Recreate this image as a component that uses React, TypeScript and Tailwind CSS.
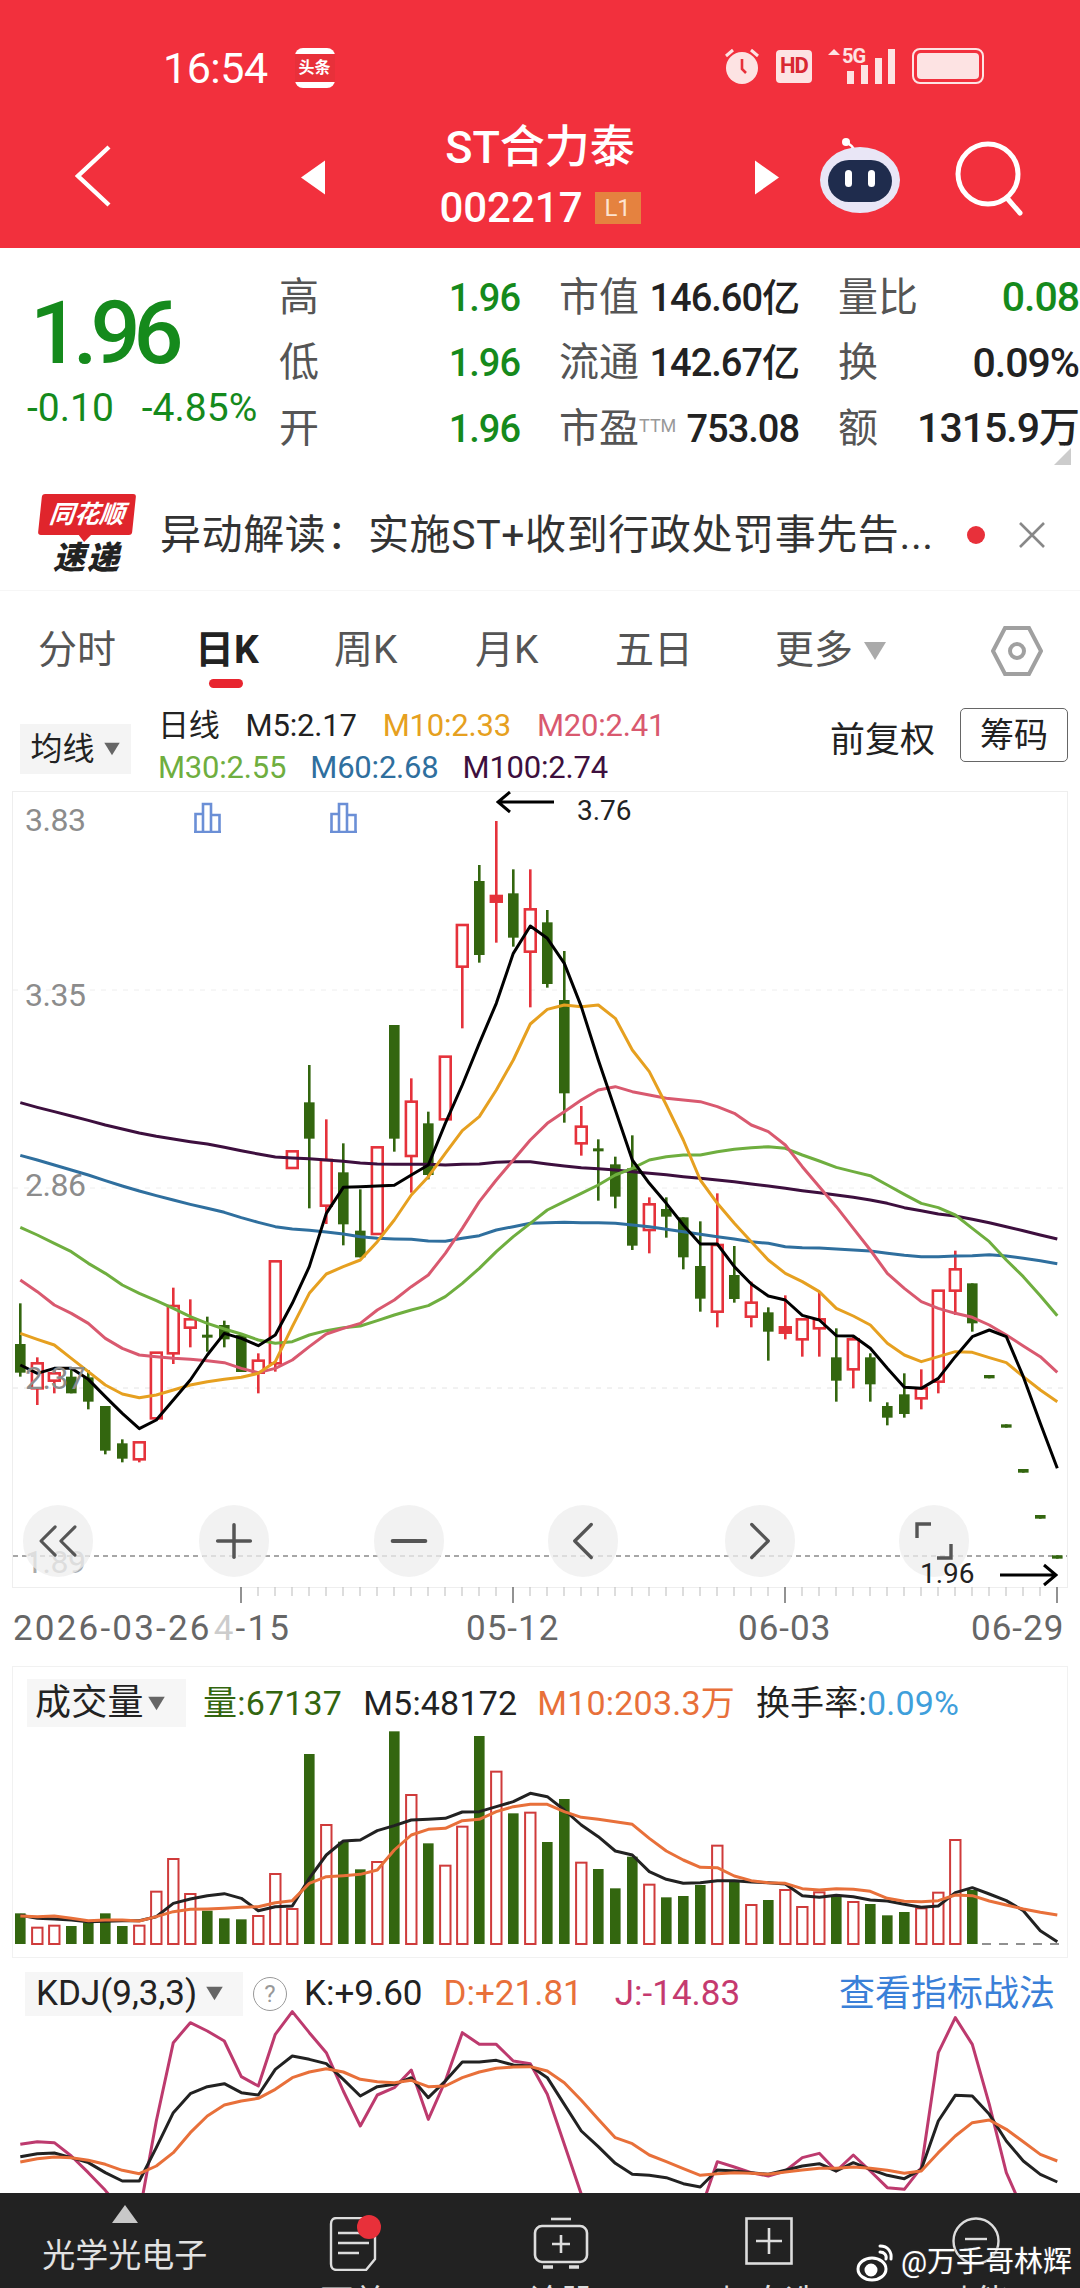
import React from 'react';
import { ChevronLeft, ChevronRight, ChevronsLeft, Minus, Plus } from 'lucide-react';

// all chart values are read off the reference: y = base + z / 3
type Candle = [number, number, number, number, 'r' | 'g'];

const candles: Candle[] = [
  [730, 852, 938, 950, 'g'], [892, 910, 985, 1035, 'r'], [925, 940, 962, 1000, 'r'], [930, 950, 1000, 1000, 'g'],
  [930, 952, 1025, 1048, 'g'], [1038, 1038, 1172, 1183, 'g'], [1138, 1150, 1196, 1207, 'g'], [1147, 1147, 1198, 1207, 'r'],
  [878, 878, 1075, 1075, 'r'], [683, 738, 880, 912, 'r'], [718, 778, 803, 862, 'r'], [770, 824, 830, 875, 'g'],
  [782, 795, 838, 862, 'g'], [820, 825, 936, 936, 'g'], [880, 902, 938, 1000, 'r'], [604, 604, 910, 935, 'r'],
  [274, 274, 324, 324, 'r'], [15, 127, 236, 445, 'g'], [178, 300, 437, 492, 'r'], [250, 337, 493, 556, 'g'],
  [388, 512, 592, 592, 'g'], [262, 262, 522, 522, 'r'], [-105, -105, 236, 275, 'g'], [55, 125, 288, 398, 'r'],
  [155, 190, 345, 358, 'g'], [-10, -10, 178, 178, 'r'], [-405, -405, -280, -95, 'r'], [-585, -537, -315, -292, 'g'],
  [-717, -492, -475, -352, 'r'], [-572, -500, -367, -340, 'g'], [-572, -452, -325, -158, 'r'], [-450, -413, -228, -217, 'g'],
  [-327, -180, 100, 188, 'g'], [138, 200, 250, 287, 'r'], [238, 265, 272, 422, 'g'], [290, 313, 410, 445, 'g'],
  [226, 325, 557, 570, 'g'], [412, 433, 510, 580, 'r'], [412, 447, 470, 533, 'g'], [472, 472, 592, 628, 'g'],
  [484, 618, 716, 755, 'g'], [400, 555, 755, 802, 'r'], [558, 645, 717, 728, 'g'], [665, 728, 770, 802, 'r'],
  [742, 757, 815, 902, 'g'], [706, 802, 818, 838, 'r'], [778, 778, 838, 890, 'r'], [695, 778, 805, 890, 'r'],
  [805, 892, 962, 1025, 'g'], [830, 838, 928, 985, 'r'], [880, 892, 973, 1025, 'g'], [1027, 1038, 1073, 1096, 'g'],
  [940, 1003, 1062, 1073, 'g'], [928, 985, 1015, 1048, 'r'], [692, 692, 965, 1000, 'r'], [572, 628, 692, 765, 'r'],
  [670, 670, 790, 815, 'g'], [945, 945, 955, 955, 'g'], [1093, 1093, 1103, 1103, 'g'], [1227, 1227, 1238, 1238, 'g'],
  [1365, 1365, 1376, 1376, 'g'], [1486, 1486, 1496, 1496, 'g'],
];

const m5 = [915, 940, 925, 925, 958, 1010, 1060, 1106, 1080, 1020, 960, 885, 820, 835, 857, 825, 730, 620, 460, 382, 380, 378, 376, 345, 315, 190, 75, -50, -170, -320, -402, -365, -290, -160, 0, 150, 300, 370, 430, 495, 552, 552, 620, 672, 708, 720, 766, 780, 827, 828, 865, 925, 982, 985, 955, 890, 830, 810, 830, 950, 1090, 1225];
const m10 = [820, 838, 855, 895, 935, 975, 1002, 1013, 1005, 990, 975, 965, 958, 952, 940, 905, 800, 700, 642, 620, 600, 545, 480, 405, 350, 280, 212, 170, 90, 0, -108, -152, -165, -160, -165, -125, -30, 35, 135, 240, 360, 430, 490, 545, 600, 640, 665, 695, 745, 768, 795, 850, 885, 905, 890, 875, 877, 893, 908, 950, 990, 1025];
const m20 = [660, 695, 735, 760, 790, 835, 865, 885, 890, 895, 898, 902, 908, 925, 938, 925, 900, 860, 822, 805, 790, 750, 720, 680, 645, 580, 505, 425, 360, 300, 240, 190, 155, 120, 90, 80, 95, 105, 115, 120, 125, 140, 160, 195, 215, 255, 320, 380, 440, 505, 570, 640, 685, 725, 745, 760, 772, 795, 825, 858, 890, 937];
const m30 = [502, 525, 550, 575, 610, 640, 675, 700, 722, 745, 770, 790, 807, 822, 840, 850, 845, 825, 812, 803, 798, 782, 765, 750, 737, 710, 670, 625, 575, 530, 490, 450, 425, 400, 375, 345, 325, 300, 290, 285, 285, 275, 268, 263, 260, 265, 285, 303, 322, 335, 347, 375, 403, 430, 443, 465, 505, 545, 600, 650, 707, 767];
const m60 = [286, 300, 315, 330, 345, 362, 378, 393, 407, 420, 433, 445, 457, 473, 487, 500, 507, 511, 516, 522, 530, 535, 537, 538, 543, 544, 535, 527, 510, 500, 490, 488, 487, 488, 488, 490, 495, 500, 508, 515, 523, 530, 537, 545, 550, 560, 563, 564, 567, 570, 573, 580, 586, 590, 590, 588, 587, 584, 588, 595, 602, 611];
const m100 = [128, 142, 155, 168, 181, 195, 207, 219, 229, 237, 245, 252, 262, 272, 282, 291, 294, 296, 300, 304, 309, 312, 313, 313, 313, 315, 313, 312, 307, 305, 305, 312, 318, 323, 326, 330, 335, 340, 344, 350, 355, 360, 365, 372, 378, 385, 392, 398, 405, 412, 420, 430, 443, 452, 462, 468, 478, 488, 500, 512, 525, 537];

const volumes: [number, 'r' | 'g'][] = [
  [670, 'g'], [713, 'r'], [707, 'r'], [708, 'g'], [697, 'g'], [670, 'g'], [708, 'g'], [707, 'r'], [605, 'r'], [507, 'r'],
  [612, 'r'], [662, 'g'], [685, 'g'], [688, 'g'], [678, 'r'], [552, 'r'], [657, 'r'], [192, 'g'], [405, 'r'], [455, 'g'],
  [538, 'g'], [516, 'r'], [124, 'g'], [315, 'r'], [460, 'g'], [527, 'r'], [410, 'r'], [138, 'g'], [245, 'r'], [370, 'g'],
  [368, 'r'], [456, 'g'], [327, 'g'], [518, 'r'], [537, 'g'], [595, 'g'], [500, 'g'], [584, 'r'], [622, 'g'], [618, 'g'],
  [585, 'g'], [467, 'r'], [575, 'g'], [645, 'r'], [630, 'g'], [600, 'r'], [651, 'r'], [607, 'r'], [617, 'g'], [636, 'r'],
  [642, 'g'], [676, 'g'], [666, 'g'], [655, 'r'], [608, 'r'], [450, 'r'], [600, 'g'],
];
const volM5 = [676, 685, 687, 690, 695, 694, 692, 692, 680, 640, 627, 617, 611, 625, 662, 650, 648, 565, 495, 453, 450, 422, 407, 390, 388, 385, 366, 365, 350, 335, 310, 320, 360, 405, 440, 483, 495, 545, 568, 580, 578, 572, 572, 576, 578, 582, 617, 622, 616, 620, 630, 633, 643, 652, 648, 608, 593, 612, 632, 662, 722, 755];
const volM10 = [678, 680, 678, 685, 692, 690, 690, 693, 680, 665, 658, 657, 655, 652, 650, 638, 632, 580, 560, 557, 553, 540, 480, 435, 418, 415, 392, 388, 365, 350, 343, 343, 365, 382, 388, 395, 403, 445, 483, 510, 532, 533, 558, 572, 578, 580, 596, 600, 596, 598, 604, 625, 634, 635, 632, 615, 617, 633, 645, 657, 667, 675];

const kLine = [1397, 1388, 1386, 1400, 1415, 1445, 1470, 1470, 1370, 1265, 1208, 1187, 1178, 1205, 1212, 1135, 1095, 1105, 1118, 1165, 1215, 1187, 1180, 1160, 1220, 1170, 1113, 1113, 1108, 1122, 1125, 1160, 1240, 1320, 1367, 1417, 1450, 1453, 1460, 1478, 1488, 1437, 1440, 1445, 1450, 1438, 1425, 1418, 1440, 1415, 1435, 1453, 1463, 1435, 1290, 1213, 1215, 1270, 1350, 1410, 1450, 1473];
const dLine = [1413, 1403, 1398, 1400, 1408, 1420, 1438, 1448, 1425, 1385, 1325, 1275, 1242, 1230, 1222, 1195, 1160, 1143, 1133, 1143, 1165, 1172, 1175, 1168, 1187, 1185, 1160, 1143, 1132, 1128, 1127, 1140, 1175, 1228, 1285, 1340, 1358, 1392, 1412, 1433, 1453, 1448, 1445, 1447, 1450, 1443, 1437, 1432, 1432, 1428, 1432, 1438, 1447, 1440, 1385, 1335, 1295, 1287, 1315, 1352, 1390, 1410];
const jLine = [1360, 1352, 1355, 1395, 1445, 1498, 1560, 1570, 1290, 1055, 995, 1020, 1050, 1157, 1185, 1030, 962, 1025, 1085, 1200, 1305, 1212, 1190, 1137, 1285, 1170, 1025, 1060, 1060, 1110, 1118, 1210, 1360, 1510, 1600, 1700, 1800, 1800, 1800, 1800, 1560, 1412, 1428, 1445, 1455, 1440, 1400, 1387, 1440, 1392, 1440, 1490, 1495, 1430, 1085, 980, 1060, 1240, 1445, 1560];

const xAt = (i: number) => 20.3 + 17 * i;
const mainY = (z: number) => 1060 + z / 3;
const lowerY = (z: number) => 1690 + z / 3;
const points = (ys: number[], toY: (z: number) => number) => ys.map((z, i) => `${xAt(i)},${toY(z)}`).join(' ');

const DARK_GREEN = '#33660f';
const RED = '#e5323b';

const Tri: React.FC<{ className: string }> = ({ className }) => (
  <svg viewBox="0 0 24 20" className={className} fill="currentColor">
    <path d="M1 1h22L12 19z" />
  </svg>
);

const Line: React.FC<{ ys: number[]; toY: (z: number) => number; color: string; width?: number }> = ({ ys, toY, color, width = 3 }) => (
  <polyline points={points(ys, toY)} fill="none" stroke={color} strokeWidth={width} strokeLinejoin="round" />
);

const CandleShape: React.FC<{ c: Candle; i: number }> = ({ c, i }) => {
  const [high, top, bottom, low, kind] = c;
  const x = xAt(i);
  const filled = kind === 'g' || bottom - top < 20;
  const color = kind === 'g' ? DARK_GREEN : RED;
  if (kind === 'g') {
    return (
      <g>
        <line x1={x} x2={x} y1={mainY(high)} y2={mainY(low)} stroke={color} strokeWidth={2.6} />
        <rect x={x - 5.3} y={mainY(top)} width={10.6} height={Math.max((bottom - top) / 3, 3)} fill={color} />
      </g>
    );
  }
  return (
    <g>
      <line x1={x} x2={x} y1={mainY(high)} y2={mainY(top)} stroke={color} strokeWidth={2.6} />
      <line x1={x} x2={x} y1={mainY(bottom)} y2={mainY(low)} stroke={color} strokeWidth={2.6} />
      <rect
        x={x - 5.4}
        y={mainY(top)}
        width={10.8}
        height={(bottom - top) / 3}
        fill={filled ? color : '#fff'}
        stroke={color}
        strokeWidth={2.6}
      />
    </g>
  );
};

const BarIcon: React.FC<{ className: string }> = ({ className }) => (
  <svg viewBox="0 0 27 31" className={className} fill="none" stroke="#6b8fd6" strokeWidth="2.6">
    <path d="M1.5 30V12H9V30M9 30V2H17V30M17 30V13H25.5V30M0 30H27" />
  </svg>
);

const RoundButton: React.FC<{ children: React.ReactNode; className: string }> = ({ children, className }) => (
  <div className={`absolute top-[713px] flex h-[72px] w-[70px] items-center justify-center rounded-full bg-[#eeeeee]/75 text-[#555] ${className}`}>
    {children}
  </div>
);

const QuoteCell: React.FC<{ label: React.ReactNode; value: string; valueClass: string }> = ({ label, value, valueClass }) => (
  <div className="flex h-[65.5px] items-center justify-between">
    <span className="text-[40px] leading-none text-[#555]">{label}</span>
    <span className={`font-medium leading-none tracking-[-1px] ${valueClass}`}>{value}</span>
  </div>
);

const FooterItem: React.FC<{ label: string; children: React.ReactNode }> = ({ label, children }) => (
  <div className="flex w-[208px] flex-col items-center">
    <div className="flex h-[92px] w-full shrink-0 items-start justify-center pt-[24px]">{children}</div>
    <span className="shrink-0 text-[33px] leading-none text-[#ddd]">{label}</span>
  </div>
);

const App: React.FC = () => {
  return (
    <div className="relative h-[2288px] w-[1080px] overflow-hidden bg-white font-['Roboto','Noto_Sans_CJK_SC',sans-serif] text-[#222]">
      {/* Red header with status bar */}
      <header className="h-[248px] bg-[#f2303d] text-white">
        <div className="flex h-[130px] items-start justify-between pl-[163px] pr-[92px] pt-[47px]">
          <div className="flex items-center gap-[27px]">
            <span className="text-[43px] leading-[42px] tracking-[-0.5px]">16:54</span>
            <div className="flex h-[40px] w-[40px] items-center rounded-[8px] bg-white">
              <span className="flex h-[28px] w-full items-center justify-center bg-[#e8303a] text-[16px] font-bold leading-none text-white">头条</span>
            </div>
          </div>
          <div className="flex items-center gap-[16px] pr-[4px]">
            <svg viewBox="0 0 36 38" className="h-[38px] w-[36px]">
              <circle cx="18" cy="21" r="16" fill="#fde3e3" />
              <path d="M18 12v10l4 4" stroke="#e8303a" strokeWidth="2.6" fill="none" />
              <path d="M2 9 9 3M34 9 27 3" stroke="#fde3e3" strokeWidth="3" />
            </svg>
            <div className="flex h-[33px] w-[36px] items-center justify-center rounded-[4px] bg-[#fde3e3] text-[22px] font-bold leading-none tracking-[-1px] text-[#d92832]">HD</div>
            <div className="relative">
              <svg viewBox="0 0 68 38" className="h-[38px] w-[68px]">
                <path d="M0 8 6 2 12 8z" fill="#fde3e3" />
                <rect x="19" y="24" width="7" height="13" fill="#fde3e3" />
                <rect x="33" y="18" width="7" height="19" fill="#fde3e3" />
                <rect x="47" y="11" width="7" height="26" fill="#fde3e3" />
                <rect x="60" y="2" width="7" height="35" fill="#fde3e3" />
              </svg>
              <span className="absolute left-[14px] top-[-1px] text-[20px] font-bold leading-none tracking-[-1px] text-[#fde3e3]">5G</span>
            </div>
            <div className="flex h-[36px] w-[72px] items-center rounded-[8px] border-2 border-[#fde3e3] p-[3px]">
              <div className="h-full w-full rounded-[4px] bg-[#fde3e3]" />
            </div>
          </div>
        </div>
        <div className="relative flex h-[118px] items-start">
          <svg viewBox="0 0 36 62" className="ml-[75px] mt-[15px] h-[62px] w-[36px]" fill="none" stroke="#fff" strokeWidth="4.4">
            <path d="M34 2 3 31 34 60" />
          </svg>
          <svg viewBox="0 0 24 34" className="ml-[190px] mt-[30px] h-[35px] w-[24px]" fill="#fff"><path d="M24 0v34L0 17z" /></svg>
          <div className="-mt-[5px] flex w-[430px] flex-col items-center">
            <span className="text-[45px] font-medium leading-none">ST合力泰</span>
            <div className="mt-[16px] flex items-center gap-[12px]">
              <span className="text-[42px] font-medium leading-[44px]">002217</span>
              <span className="flex h-[32px] w-[46px] items-center justify-center bg-[#e5823f] text-[24px] leading-none text-[#fde3d0]">L1</span>
            </div>
          </div>
          <svg viewBox="0 0 24 34" className="mt-[30px] h-[35px] w-[24px]" fill="#fff"><path d="M0 0v34l24-17z" /></svg>
          {/* robot mascot */}
          <svg viewBox="0 0 84 76" className="ml-[39px] mt-[8px] h-[76px] w-[84px]">
            <path d="M36 12C34 6 30 6 28 4" stroke="#fff" strokeWidth="2.5" fill="none" />
            <circle cx="28" cy="4" r="4" fill="#fff" />
            <ellipse cx="42" cy="42" rx="40" ry="33" fill="#e9e6f6" />
            <rect x="10" y="22" width="64" height="42" rx="21" fill="#1f2c4d" />
            <rect x="27" y="32" width="7" height="17" rx="3.5" fill="#fff" />
            <rect x="50" y="32" width="7" height="17" rx="3.5" fill="#fff" />
          </svg>
          <svg viewBox="0 0 72 76" className="ml-[52px] mt-[10px] h-[76px] w-[72px]" fill="none" stroke="#fff" strokeWidth="5">
            <circle cx="34" cy="34" r="30" />
            <path d="M53 58 66 73" strokeLinecap="round" />
          </svg>
        </div>
      </header>

      {/* Quote block */}
      <section className="relative flex h-[232px]">
        <div className="w-[279px] pl-[30px] pt-[40px] text-[#158a1c]">
          <div className="text-[88px] font-medium leading-[90px] tracking-[-7px]">1.96</div>
          <div className="mt-[10px] flex gap-[28px] text-[39px] leading-[40px]">
            <span className="-ml-[3px]">-0.10</span>
            <span>-4.85%</span>
          </div>
        </div>
        <div className="grid grid-cols-[241px_240px_241px] content-start gap-x-[39px] pt-[17px]">
          <QuoteCell label="高" value="1.96" valueClass="text-[38px] text-[#158a1c]" />
          <QuoteCell label="市值" value="146.60亿" valueClass="text-[38px] text-[#222]" />
          <QuoteCell label="量比" value="0.08" valueClass="text-[41px] text-[#158a1c]" />
          <QuoteCell label="低" value="1.96" valueClass="text-[38px] text-[#158a1c]" />
          <QuoteCell label="流通" value="142.67亿" valueClass="text-[38px] text-[#222]" />
          <QuoteCell label="换" value="0.09%" valueClass="text-[41px] text-[#222]" />
          <QuoteCell label="开" value="1.96" valueClass="text-[38px] text-[#158a1c]" />
          <QuoteCell
            label={<>市盈<sup className="relative -top-[10px] align-baseline text-[18px] text-[#999]">TTM</sup></>}
            value="753.08"
            valueClass="text-[38px] text-[#222]"
          />
          <QuoteCell label="额" value="1315.9万" valueClass="text-[41px] text-[#222]" />
        </div>
        <div className="absolute bottom-[15px] right-[9px] h-0 w-0 border-b-[17px] border-l-[17px] border-b-[#ccc] border-l-transparent" />
      </section>

      {/* News ticker */}
      <section className="flex h-[110px] items-center bg-white pl-[38px]">
        <div className="flex h-[82px] w-[98px] flex-col items-center">
          <div className="relative flex h-[41px] w-[94px] -skew-x-6 items-center justify-center rounded-[3px] bg-[#e0252c]">
            <span className="text-[25px] font-bold italic leading-none text-white">同花顺</span>
            <span className="absolute -bottom-[7px] left-[40px] h-0 w-0 border-x-[7px] border-t-[8px] border-x-transparent border-t-[#e0252c]" />
          </div>
          <span className="mt-[7px] text-[32px] font-black italic leading-none tracking-[2px] text-[#222]">速递</span>
        </div>
        <p className="ml-[24px] w-[807px] whitespace-nowrap text-[41px] leading-none tracking-[0.6px] text-[#333]">异动解读：实施ST+收到行政处罚事先告...</p>
        <span className="h-[18px] w-[18px] rounded-full bg-[#e8303a]" />
        <svg viewBox="0 0 26 26" className="ml-[34px] h-[26px] w-[26px]" stroke="#888" strokeWidth="2.6"><path d="M1 1 25 25M25 1 1 25" /></svg>
      </section>

      {/* Period tabs */}
      <section className="grid h-[110px] grid-cols-[157px_139px_141px_140px_160px_200px_1fr] items-center border-t border-[#f6f6f6] pl-[38px] pt-[10px] text-[39px] leading-none text-[#555]">
        <span>分时</span>
        <span className="relative font-bold text-[#222]">
          日K
          <span className="absolute left-[14px] top-[48px] h-[9px] w-[34px] rounded-full bg-[#e8252f]" />
        </span>
        <span>周K</span>
        <span>月K</span>
        <span>五日</span>
        <span className="flex items-center gap-[10px]">更多<Tri className="h-[20px] w-[24px] text-[#aaa]" /></span>
        <svg viewBox="0 0 52 50" className="ml-[16px] h-[50px] w-[52px]" fill="none" stroke="#a0a0a0" strokeWidth="4">
          <path d="M14 2h24l12 23-12 23H14L2 25z" />
          <circle cx="26" cy="25" r="7" />
        </svg>
      </section>

      {/* MA legend */}
      <section className="flex h-[92px] pl-[20px] pr-[12px]">
        <div className="mt-[24px] flex h-[50px] w-[111px] items-center justify-center gap-[8px] bg-[#f4f4f4] text-[32px] leading-none">
          均线<Tri className="h-[14px] w-[18px] text-[#666]" />
        </div>
        <div className="ml-[27px] flex flex-col gap-[11px] pt-[10px] text-[31px] leading-[31px] tracking-[-0.2px]">
          <div className="flex gap-[26px]">
            <span>日线</span>
            <span>M5:2.17</span>
            <span className="text-[#e6a020]">M10:2.33</span>
            <span className="text-[#d9596f]">M20:2.41</span>
          </div>
          <div className="flex gap-[24px]">
            <span className="text-[#6fae3f]">M30:2.55</span>
            <span className="text-[#2f6f9e]">M60:2.68</span>
            <span className="text-[#3d0f3e]">M100:2.74</span>
          </div>
        </div>
        <span className="ml-auto mr-[25px] mt-[23px] text-[35px] leading-none">前复权</span>
        <span className="mt-[8px] flex h-[54px] w-[108px] items-center justify-center rounded-[5px] border border-[#666] text-[34px] leading-none">筹码</span>
      </section>

      {/* Candle chart */}
      <section className="relative mx-[13px] h-[795px] ring-1 ring-[#eeeeee]">
        <svg viewBox="13 792 1054 795" className="block h-[795px] w-[1054px]">
          <line x1="13" x2="1067" y1="990" y2="990" stroke="#eeeeee" strokeDasharray="5 6" />
          <line x1="13" x2="1067" y1="1188" y2="1188" stroke="#eeeeee" strokeDasharray="5 6" />
          <line x1="13" x2="1067" y1="1388" y2="1388" stroke="#e4e4e4" strokeDasharray="5 6" />
          <line x1="13" x2="1067" y1="1556" y2="1556" stroke="#8a8a8a" strokeWidth="1.6" strokeDasharray="5 4" />
          {candles.map((c, i) => <CandleShape key={i} c={c} i={i} />)}
          <Line ys={m100} toY={mainY} color="#3d0f3e" />
          <Line ys={m60} toY={mainY} color="#2f6f9e" />
          <Line ys={m30} toY={mainY} color="#6fae3f" />
          <Line ys={m20} toY={mainY} color="#d9596f" />
          <Line ys={m10} toY={mainY} color="#e6a020" />
          <Line ys={m5} toY={mainY} color="#000000" />
        </svg>

        <span className="absolute left-[12px] top-[12px] text-[32px] leading-none tracking-[-0.5px] text-[#8c8c8c]">3.83</span>
        <span className="absolute left-[12px] top-[187px] text-[32px] leading-none tracking-[-0.5px] text-[#8c8c8c]">3.35</span>
        <span className="absolute left-[12px] top-[377px] text-[32px] leading-none tracking-[-0.5px] text-[#8c8c8c]">2.86</span>
        <span className="absolute left-[12px] top-[570px] text-[32px] leading-none tracking-[-0.5px] text-[#8c8c8c]">2.37</span>
        <span className="absolute left-[12px] top-[754px] text-[32px] leading-none tracking-[-0.5px] text-[#aaa]">1.89</span>

        <BarIcon className="absolute left-[181px] top-[10px] h-[31px] w-[27px]" />
        <BarIcon className="absolute left-[317px] top-[10px] h-[31px] w-[27px]" />

        <svg viewBox="0 0 58 24" className="absolute left-[483px] top-[-1px] h-[24px] w-[58px]" fill="none" stroke="#000" strokeWidth="3">
          <path d="M58 11H2M14 1 2 11l12 10" />
        </svg>
        <span className="absolute left-[564px] top-[5px] text-[28px] leading-[28px]">3.76</span>

        <RoundButton className="left-[10px]"><ChevronsLeft className="h-[68px] w-[68px] shrink-0" strokeWidth={1.1} /></RoundButton>
        <RoundButton className="left-[186px]"><Plus className="h-[56px] w-[56px] shrink-0" strokeWidth={1.5} /></RoundButton>
        <RoundButton className="left-[361px]"><Minus className="h-[56px] w-[56px] shrink-0" strokeWidth={1.7} /></RoundButton>
        <RoundButton className="left-[535px]"><ChevronLeft className="h-[66px] w-[66px] shrink-0" strokeWidth={1.2} /></RoundButton>
        <RoundButton className="left-[712px]"><ChevronRight className="h-[66px] w-[66px] shrink-0" strokeWidth={1.2} /></RoundButton>
        <RoundButton className="left-[886px]">
          <svg viewBox="0 0 38 38" className="h-[38px] w-[38px]" fill="none" stroke="#555" strokeWidth="3.4">
            <path d="M2 16V2H16M36 22V36H22" />
          </svg>
        </RoundButton>

        <span className="absolute left-[907px] top-[768px] text-[28px] leading-[28px]">1.96</span>
        <svg viewBox="0 0 58 24" className="absolute left-[987px] top-[771px] h-[24px] w-[58px]" fill="none" stroke="#000" strokeWidth="3">
          <path d="M0 12H56M44 2l12 10-12 10" />
        </svg>
      </section>

      {/* Date axis */}
      <section className="relative mx-[13px] h-[80px]">
        <svg viewBox="13 1587 1054 16" className="block h-[16px] w-[1054px]" stroke="#999">
          {Array.from({ length: 49 }, (_, i) => {
            const x = 241 + 17 * i;
            const major = i % 16 === 0;
            return <line key={i} x1={x} x2={x} y1="1587" y2={major ? 1603 : 1596} strokeWidth={major ? 1.6 : 1} stroke={major ? '#777' : '#bbb'} />;
          })}
        </svg>
        <div className="flex pt-[8px] text-[35px] leading-[36px] tracking-[1px] text-[#666]">
          <span className="w-[453px] tracking-[2.2px]">2026-03-26<span className="ml-[2px] text-[#ccc]">4</span>-15</span>
          <span className="w-[272px]">05-12</span>
          <span className="w-[233px]">06-03</span>
          <span className="whitespace-nowrap">06-29</span>
        </div>
      </section>

      {/* Volume panel */}
      <section className="mx-[13px] h-[290px] ring-1 ring-[#f1f1f1]">
        <div className="flex h-[62px] items-center whitespace-nowrap pl-[14px] pt-[10px] text-[34px] leading-none tracking-[0.2px]">
          <div className="flex h-[48px] w-[159px] items-center gap-[3px] bg-[#f6f6f6] pl-[8px] text-[36px]">
            成交量<Tri className="h-[15px] w-[19px] text-[#666]" />
          </div>
          <span className="ml-[17px] text-[#33660f]">量:67137</span>
          <span className="ml-[21px]">M5:48172</span>
          <span className="ml-[20px] text-[#e8703a]">M10:203.3万</span>
          <span className="ml-[21px]">换手率:<span className="text-[#3f9fdb]">0.09%</span></span>
        </div>
        <svg viewBox="13 1729 1054 221" className="block h-[221px] w-[1054px]">
          {volumes.map(([top, kind], i) => (
            kind === 'g'
              ? <rect key={i} x={xAt(i) - 5.3} y={lowerY(top)} width={10.6} height={(762 - top) / 3} fill={DARK_GREEN} />
              : <rect key={i} x={xAt(i) - 5.2} y={lowerY(top)} width={10.4} height={(762 - top) / 3} fill="#fff" stroke="#cf3b3b" strokeWidth={2} />
          ))}
          <line x1="982" x2="1062" y1="1944" y2="1944" stroke="#222" strokeWidth="1.2" strokeDasharray="9 8" />
          <Line ys={volM5} toY={lowerY} color="#222222" />
          <Line ys={volM10} toY={lowerY} color="#e8703a" />
        </svg>
      </section>

      {/* KDJ panel */}
      <section className="relative mx-[13px] h-[246px] overflow-hidden border-t border-[#f1f1f1]">
        <div className="flex h-[51px] items-center whitespace-nowrap pl-[12px] pt-[20px] text-[35px] leading-none">
          <div className="flex h-[44px] w-[218px] items-center gap-[8px] bg-[#f6f6f6] pl-[11px]">
            KDJ(9,3,3)<Tri className="h-[15px] w-[19px] text-[#666]" />
          </div>
          <span className="ml-[10px] flex h-[34px] w-[34px] items-center justify-center rounded-full border border-[#999] text-[24px] leading-none text-[#999]">?</span>
          <span className="ml-[17px]">K:+9.60</span>
          <span className="ml-[21px] text-[#e8703a]">D:+21.81</span>
          <span className="ml-[32px] text-[#c53a6f]">J:-14.83</span>
          <span className="ml-auto mr-[12px] text-[36px] text-[#3a80d8]">查看指标战法</span>
        </div>
        <svg viewBox="13 2008 1054 185" className="block h-[185px] w-[1054px]">
          <Line ys={jLine} toY={lowerY} color="#bd3a6e" />
          <Line ys={kLine} toY={lowerY} color="#222222" />
          <Line ys={dLine} toY={lowerY} color="#e8703a" />
        </svg>
      </section>

      {/* Dark bottom bar */}
      <footer className="absolute inset-x-0 top-[2193px] flex h-[95px] overflow-hidden bg-[#222222] text-[#ddd]">
        <div className="flex w-[250px] flex-col items-center pt-[12px]">
          <svg viewBox="0 0 26 18" className="h-[18px] w-[26px]" fill="#c8c8c8"><path d="M13 0 26 18H0z" /></svg>
          <span className="mt-[16px] text-[33px] leading-none text-[#e2e2e2]">光学光电子</span>
        </div>
        <FooterItem label="下单">
          <div className="relative">
            <svg viewBox="0 0 48 54" className="h-[54px] w-[48px]" fill="none" stroke="#ddd" strokeWidth="2.4">
              <path d="M8 1H34L46 10V42L37 53H8Q2 53 2 47V7Q2 1 8 1Z" />
              <path d="M9 16H34M9 26H40M9 36H30" />
            </svg>
            <span className="absolute -right-[4px] -top-[2px] h-[24px] w-[24px] rounded-full bg-[#e8303a]" />
          </div>
        </FooterItem>
        <FooterItem label="诊股">
          <svg viewBox="0 0 56 52" className="h-[52px] w-[56px]" fill="none" stroke="#ddd" strokeWidth="2.6">
            <path d="M18 2H38" />
            <rect x="2" y="9" width="52" height="36" rx="7" />
            <path d="M10 50H20M36 50H46" strokeWidth="3.4" />
            <path d="M28 18V36M19 27H37" />
          </svg>
        </FooterItem>
        <FooterItem label="加自选">
          <svg viewBox="0 0 48 48" className="h-[48px] w-[48px]" fill="none" stroke="#ddd" strokeWidth="2.6">
            <rect x="1.5" y="1.5" width="45" height="45" />
            <path d="M24 11V37M11 24H37" />
          </svg>
        </FooterItem>
        <FooterItem label="功能">
          <svg viewBox="0 0 48 48" className="h-[48px] w-[48px]" fill="none" stroke="#ddd" strokeWidth="2.4">
            <circle cx="24" cy="24" r="22.5" />
            <path d="M13 22H35" />
          </svg>
        </FooterItem>
      </footer>

      {/* Weibo watermark */}
      <div className="absolute left-[856px] top-[2242px] flex items-center gap-[7px] whitespace-nowrap text-[29px] leading-none text-white [text-shadow:0_0_2px_#555]">
        <svg viewBox="0 0 38 40" className="h-[40px] w-[38px]" fill="none" stroke="#fff" strokeWidth="3">
          <ellipse cx="16" cy="27" rx="14" ry="11" />
          <circle cx="15" cy="28" r="5" fill="#fff" />
          <path d="M24 4C32 4 36 10 35 17M24 10C28 10 31 13 30 17" strokeLinecap="round" />
        </svg>
        <span>@万手哥林辉</span>
      </div>
    </div>
  );
};

export default App;
